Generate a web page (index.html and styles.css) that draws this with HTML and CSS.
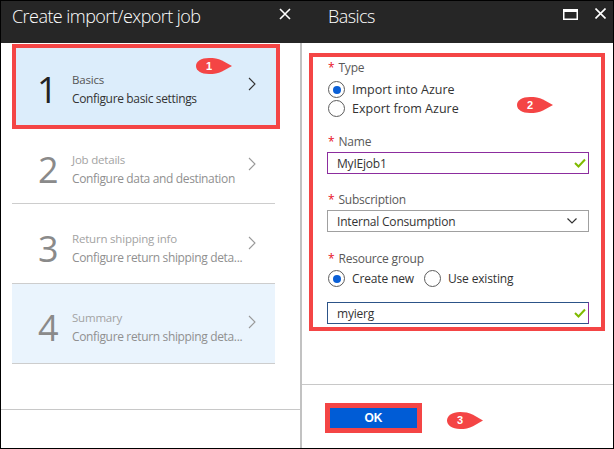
FILE: index.html
```html
<!DOCTYPE html>
<html>
<head>
<meta charset="utf-8">
<link rel="stylesheet" href="styles.css">
</head>
<body>
<div class="frame">
  <section class="blade blade-left">
    <header class="blade-head">
      <h1 class="blade-title">Create import/export job</h1>
      <div class="head-icons">
        <svg class="icon-close" width="12" height="12" viewBox="0 0 12 12"><path d="M1 1L11 11M11 1L1 11" stroke="#fff" stroke-width="1.6" fill="none"/></svg>
      </div>
    </header>
    <div class="blade-body">
      <div class="steps">
        <div class="step step-current">
          <span class="step-num">1</span>
          <div class="step-text">
            <div class="step-title">Basics</div>
            <div class="step-desc">Configure basic settings</div>
          </div>
          <svg class="chev" width="8" height="14" viewBox="0 0 8 14"><polyline points="1,1 7,7 1,13" fill="none" stroke="#333" stroke-width="1.1"/></svg>
          <span class="badge badge-1"><svg width="36" height="16" viewBox="0 0 36 16"><path d="M36 8L26 2.6C22 0.6 18 0 13 0C5 0 0 3.5 0 8C0 12.5 5 16 13 16C18 16 22 15.4 26 13.4Z" fill="#f44545"/></svg><span class="badge-num">1</span></span>
        </div>
        <div class="step step-2">
          <span class="step-num">2</span>
          <div class="step-text">
            <div class="step-title">Job details</div>
            <div class="step-desc">Configure data and destination</div>
          </div>
          <svg class="chev" width="8" height="14" viewBox="0 0 8 14"><polyline points="1,1 7,7 1,13" fill="none" stroke="#999" stroke-width="1.1"/></svg>
        </div>
        <div class="step step-3">
          <span class="step-num">3</span>
          <div class="step-text">
            <div class="step-title">Return shipping info</div>
            <div class="step-desc">Configure return shipping deta...</div>
          </div>
          <svg class="chev" width="8" height="14" viewBox="0 0 8 14"><polyline points="1,1 7,7 1,13" fill="none" stroke="#999" stroke-width="1.1"/></svg>
        </div>
        <div class="step step-4">
          <span class="step-num">4</span>
          <div class="step-text">
            <div class="step-title">Summary</div>
            <div class="step-desc">Configure return shipping deta...</div>
          </div>
          <svg class="chev" width="8" height="14" viewBox="0 0 8 14"><polyline points="1,1 7,7 1,13" fill="none" stroke="#999" stroke-width="1.1"/></svg>
        </div>
      </div>
      <div class="spacer"></div>
      <footer class="blade-foot foot-left"></footer>
    </div>
  </section>

  <section class="blade blade-right">
    <header class="blade-head">
      <h1 class="blade-title title-right">Basics</h1>
      <div class="head-icons">
        <svg class="icon-max" width="15" height="11" viewBox="0 0 15 11"><rect x="0.75" y="1.5" width="13.5" height="8.75" fill="none" stroke="#fff" stroke-width="1.5"/><rect x="0" y="0" width="15" height="3" fill="#fff"/></svg>
        <svg class="icon-close2" width="11" height="11" viewBox="0 0 11 11"><path d="M0.5 0.5L10.5 10.5M10.5 0.5L0.5 10.5" stroke="#fff" stroke-width="1.6" fill="none"/></svg>
      </div>
    </header>
    <div class="blade-body body-right">
      <div class="form">
        <div class="field-label"><span class="req">*</span>Type</div>
        <div class="radio-stack">
          <label class="radio"><span class="radio-dot checked"></span>Import into Azure</label>
          <label class="radio"><span class="radio-dot"></span>Export from Azure</label>
        </div>

        <div class="field-label lbl-name"><span class="req">*</span>Name</div>
        <div class="input input-name">
          <span class="input-text">MyIEjob1</span>
          <svg class="check" width="12" height="10" viewBox="0 0 12 10"><polyline points="1,5 4.5,8.5 11,1.5" fill="none" stroke="#7fba00" stroke-width="2"/></svg>
        </div>

        <div class="field-label lbl-sub"><span class="req">*</span>Subscription</div>
        <div class="input select">
          <span class="input-text">Internal Consumption</span>
          <svg class="dd" width="10" height="6" viewBox="0 0 10 6"><polyline points="0.5,0.5 5,5 9.5,0.5" fill="none" stroke="#333" stroke-width="1.2"/></svg>
        </div>

        <div class="field-label lbl-rg"><span class="req">*</span>Resource group</div>
        <div class="radio-row">
          <label class="radio"><span class="radio-dot checked"></span>Create new</label>
          <label class="radio radio-second"><span class="radio-dot"></span>Use existing</label>
        </div>
        <div class="input input-rg">
          <span class="input-text">myierg</span>
          <svg class="check" width="12" height="10" viewBox="0 0 12 10"><polyline points="1,5 4.5,8.5 11,1.5" fill="none" stroke="#7fba00" stroke-width="2"/></svg>
        </div>

        <span class="badge badge-2"><svg width="36" height="16" viewBox="0 0 36 16"><path d="M36 8L26 2.6C22 0.6 18 0 13 0C5 0 0 3.5 0 8C0 12.5 5 16 13 16C18 16 22 15.4 26 13.4Z" fill="#f44545"/></svg><span class="badge-num">2</span></span>
      </div>
      <div class="spacer"></div>
      <footer class="blade-foot foot-right">
        <div class="ok-wrap"><button class="btn-ok">OK</button></div>
        <span class="badge badge-3"><svg width="36" height="17" viewBox="0 0 36 16" preserveAspectRatio="none"><path d="M36 8L26 2.6C22 0.6 18 0 13 0C5 0 0 3.5 0 8C0 12.5 5 16 13 16C18 16 22 15.4 26 13.4Z" fill="#f44545"/></svg><span class="badge-num">3</span></span>
      </footer>
    </div>
  </section>
</div>
</body>
</html>
```

FILE: styles.css
```css
html, body {
  margin: 0;
  padding: 0;
  background: #fff;
}

.frame {
  width: 614px;
  height: 449px;
  box-sizing: border-box;
  border: 1px solid #000;
  display: flex;
  background: #fff;
  font-family: "Open Sans", "Noto Sans", sans-serif;
  overflow: hidden;
}

.blade {
  display: flex;
  flex-direction: column;
}

.blade-left {
  width: 299px;
}

.blade-right {
  flex: 1;
}

.blade-head {
  height: 42px;
  flex: none;
  background: #262626;
  color: #fff;
  display: flex;
  align-items: flex-start;
}

.blade-left .blade-head {
  padding-left: 11px;
}

.blade-title {
  margin: 0;
  font-size: 18px;
  font-weight: 300;
  letter-spacing: -0.55px;
  line-height: 28px;
  padding-top: 1px;
  white-space: nowrap;
}

.title-right {
  padding-left: 28px;
}

.head-icons {
  margin-left: auto;
  display: flex;
  align-items: flex-start;
}

.icon-close {
  margin-top: 7px;
  margin-right: 9px;
}

.icon-max {
  margin-top: 8px;
  margin-right: 17px;
}

.icon-close2 {
  margin-top: 7px;
  margin-right: 7px;
}

.blade-body {
  flex: 1;
  display: flex;
  flex-direction: column;
}

.spacer {
  flex: 1;
}

/* steps */
.steps {
  padding-left: 11px;
}

.step {
  position: relative;
  display: flex;
  align-items: center;
  box-sizing: border-box;
  width: 263px;
  height: 80px;
  padding-left: 26px;
  border-bottom: 1px solid #cdcdcd;
}

.step-current {
  margin-top: 1px;
  width: 268px;
  height: 85px;
  border: 4px solid #f44545;
  background: #dcedfb;
  padding-left: 21px;
  padding-top: 6px;
}

.step-2 {
  height: 75px;
  padding-top: 8px;
}

.step-3 {
  padding-top: 11px;
}

.step-4 {
  padding-top: 9px;
  background: #eaf4fd;
}

.step-num {
  flex: none;
  width: 34px;
  font-size: 36px;
  font-weight: 400;
  line-height: 40px;
  color: #8a8a8a;
}

.step-current .step-num {
  width: 35px;
  color: #222;
}

.step-text {
  white-space: nowrap;
}

.step-title {
  font-size: 11.5px;
  letter-spacing: -0.2px;
  line-height: 18px;
  color: #a3a3a3;
}

.step-desc {
  font-size: 12px;
  letter-spacing: -0.35px;
  line-height: 20px;
  color: #909090;
}

.step-current .step-title {
  color: #555;
}

.step-current .step-desc {
  color: #333;
}

.chev {
  margin-left: auto;
  margin-right: 19px;
  margin-bottom: 12px;
  flex: none;
}

.step-current .chev {
  margin-right: 20px;
}

.blade-foot {
  flex: none;
  box-sizing: border-box;
  border-top: 1px solid #c8c8c8;
}

.foot-left {
  height: 39px;
}

/* right blade */
.body-right {
  border-left: 2px solid #c2c2c2;
}

.form {
  position: relative;
  box-sizing: border-box;
  height: 278px;
  margin: 10px 8px 0 7px;
  border: 4px solid #f44545;
  padding: 3px 12px 0 14px;
}

.field-label {
  font-size: 12px;
  letter-spacing: -0.2px;
  line-height: 16px;
  color: #595959;
  white-space: nowrap;
}

.req {
  color: #e81123;
  margin-right: 4px;
  margin-left: 1px;
}

.radio-stack {
  margin-top: 4px;
}

.radio {
  display: flex;
  align-items: center;
  height: 19px;
  font-size: 12px;
  letter-spacing: -0.15px;
  color: #333;
  white-space: nowrap;
}

.radio-stack .radio {
  font-size: 12.5px;
  letter-spacing: 0;
}

.radio-dot {
  position: relative;
  box-sizing: border-box;
  width: 17px;
  height: 17px;
  border: 1px solid #5c5c5c;
  border-radius: 50%;
  margin-left: 1px;
  margin-right: 7px;
  flex: none;
  background: #fff;
}

.radio-dot.checked::after {
  content: "";
  position: absolute;
  left: 3.5px;
  top: 3.5px;
  width: 8px;
  height: 8px;
  border-radius: 50%;
  background: #0a5fd6;
}

.lbl-name {
  margin-top: 16px;
}

.lbl-sub {
  margin-top: 18px;
}

.lbl-rg {
  margin-top: 19px;
}

.input {
  box-sizing: border-box;
  height: 22px;
  margin-top: 2px;
  border: 1px solid #8c2d9e;
  padding-left: 9px;
  display: flex;
  align-items: center;
  font-size: 12px;
  letter-spacing: -0.2px;
  color: #333;
}

.check {
  margin-left: auto;
  margin-right: 2px;
}

.select {
  border-color: #a0a0a0;
}

.dd {
  margin-left: auto;
  margin-right: 11px;
}

.radio-row {
  display: flex;
  margin-top: 2px;
}

.radio-second {
  margin-left: 9px;
}

.input-rg {
  margin-top: 14px;
  border-color: #2c5488;
  border-right-color: #8c2d9e;
}

/* footer right */
.foot-right {
  position: relative;
  height: 64px;
  padding-top: 18px;
  padding-left: 23px;
}

.ok-wrap {
  width: 97px;
  height: 30px;
  box-sizing: border-box;
  border: 5px solid #f44545;
}

.btn-ok {
  display: block;
  width: 87px;
  height: 20px;
  border: none;
  margin: 0;
  padding: 0;
  background: #005cd6;
  color: #fff;
  font-family: "Liberation Sans", "Open Sans", sans-serif;
  font-weight: bold;
  font-size: 12px;
}

/* badges */
.badge {
  position: absolute;
  width: 36px;
  height: 16px;
}

.badge svg {
  display: block;
}

.badge-num {
  position: absolute;
  left: 0;
  top: 0;
  width: 26px;
  text-align: center;
  line-height: 16px;
  font-family: "Liberation Sans", sans-serif;
  font-weight: bold;
  font-size: 11px;
  color: #fff;
}

.badge-1 {
  left: 180px;
  top: 10px;
}

.badge-2 {
  left: 204px;
  top: 40px;
}

.badge-3 {
  left: 145px;
  top: 27px;
  height: 17px;
}

.badge-3 .badge-num {
  line-height: 17px;
}
```
